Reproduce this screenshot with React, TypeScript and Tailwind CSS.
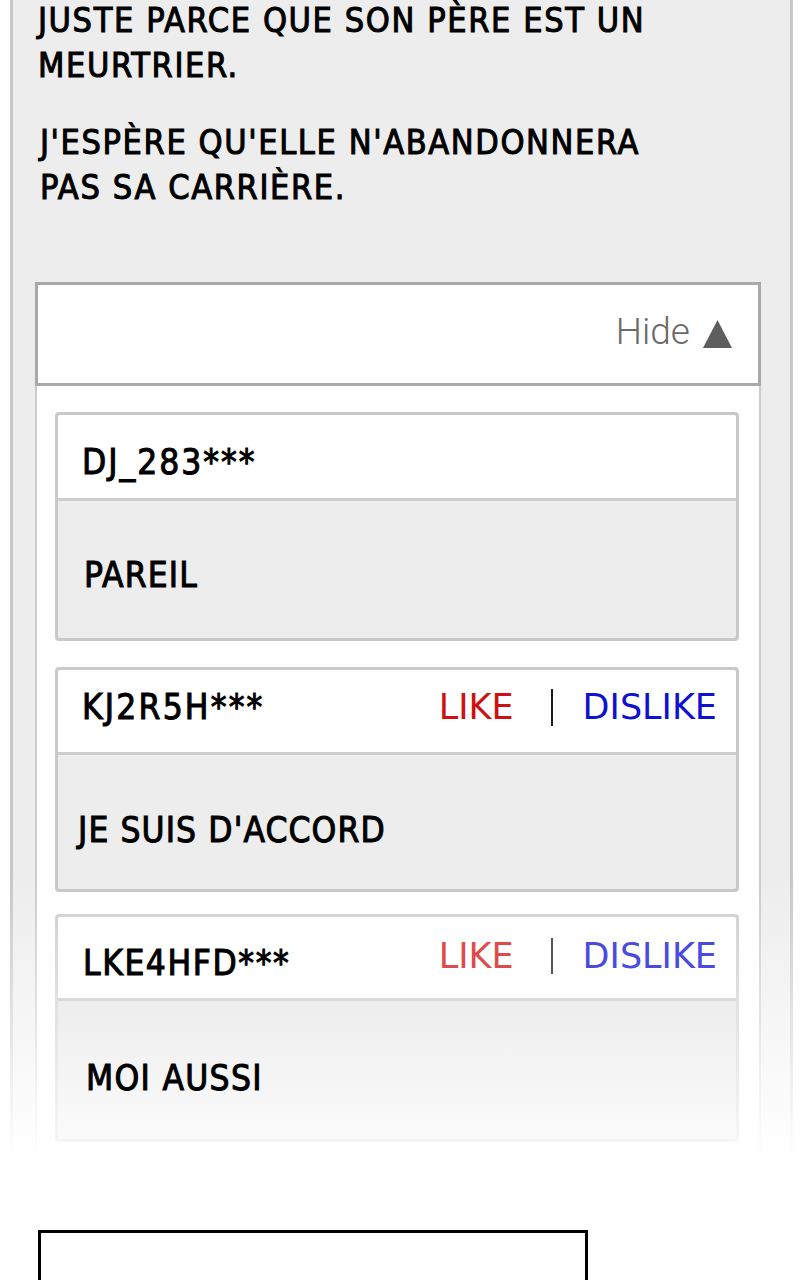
import React from "react";

const cond = "font-['DejaVu_Sans_Condensed','DejaVu_Sans',sans-serif] [font-stretch:condensed] font-normal [-webkit-text-stroke:1px_#000]";

function Votes({ faded }: { faded?: boolean }) {
  return (
    <div className="flex items-center font-['DejaVu_Sans','Verdana',sans-serif] text-[35px] leading-none whitespace-nowrap">
      <span className={faded ? "text-[#de4b4b]" : "text-[#cf1010]"}>LIKE</span>
      <span className={faded ? "ml-[37px] w-[2px] h-[36px] bg-[#555555]" : "ml-[37px] w-[2px] h-[37px] bg-[#1a1a1a]"} />
      <span className={faded ? "ml-[30px] text-[#4a4ade]" : "ml-[30px] text-[#1010cf]"}>DISLIKE</span>
    </div>
  );
}

export default function App() {
  return (
    <div className="w-[800px] h-[1280px] overflow-hidden bg-white">
      {/* outer panel with fading side borders */}
      <div className="ml-[10px] w-[783px] px-[3px] bg-[linear-gradient(to_bottom,#c8c8c8_880px,#ffffff_1162px)]">
        <div className="pb-[4px] bg-[linear-gradient(to_bottom,#ededed_880px,#ffffff_1162px)]">
          <div className={`${cond} text-[34px] leading-[45px] tracking-[1.6px] text-black pl-[25px] whitespace-nowrap`}>
            <p className="-mt-[2px]">
              JUSTE PARCE QUE SON PÈRE EST UN
              <br />
              MEURTRIER.
            </p>
            <p className="mt-[32px] pl-[2px]">
              J'ESPÈRE QU'ELLE N'ABANDONNERA
              <br />
              PAS SA CARRIÈRE.
            </p>
          </div>

          {/* comments container */}
          <div className="mt-[72px] ml-[22px] w-[726px]">
            <div className="h-[104px] border-[3px] border-[#a9a9a9] bg-white flex items-center justify-end pr-[26px]">
              <span className="font-['Roboto',sans-serif] font-light text-[37px] leading-none text-[#6a6a6a] -mt-[6px]">Hide</span>
              <svg className="ml-[13px]" width="29" height="28" viewBox="0 0 29 28">
                <polygon points="14.5,0 29,28 0,28" fill="#5e5e5e" />
              </svg>
            </div>

            <div className="px-[2px] bg-[linear-gradient(to_bottom,#cbcbcb_494px,#ffffff_776px)]">
              <div className="bg-white pt-[26px] pl-[18px] pr-[20px] pb-[21px] flex flex-col">
                {/* card 1 */}
                <div className="rounded-[4px] p-[3px] bg-[#c9c9c9]">
                  <div className="rounded-[2px] overflow-hidden">
                    <div className={`h-[83px] bg-white flex items-center pl-[24px] pt-[12px] ${cond} text-[35px] tracking-[2px] text-black leading-none whitespace-nowrap`}>
                      DJ_283***
                    </div>
                    <div className="h-[3px] bg-[#cdcdcd]" />
                    <div className={`h-[137px] bg-[#ededed] flex items-center pl-[26px] pt-[12px] ${cond} text-[35px] tracking-[1.2px] text-black leading-none whitespace-nowrap`}>
                      PAREIL
                    </div>
                  </div>
                </div>

                {/* card 2 */}
                <div className="mt-[26px] rounded-[4px] p-[3px] bg-[#c9c9c9]">
                  <div className="rounded-[2px] overflow-hidden">
                    <div className="h-[82px] bg-white flex items-center justify-between pl-[24px] pr-[19px] pb-[7px]">
                      <span className={`${cond} text-[35px] tracking-[2.2px] text-black leading-none whitespace-nowrap`}>KJ2R5H***</span>
                      <Votes />
                    </div>
                    <div className="h-[3px] bg-[#cdcdcd]" />
                    <div className={`h-[134px] bg-[#ededed] flex items-center pl-[20px] pt-[16px] ${cond} text-[35px] tracking-[1.1px] text-black leading-none whitespace-nowrap`}>
                      JE SUIS D'ACCORD
                    </div>
                  </div>
                </div>

                {/* card 3 (fading) */}
                <div className="mt-[22px] rounded-[4px] p-[3px] bg-[linear-gradient(to_bottom,#d3d3d3,#f6f6f6)]">
                  <div className="rounded-[2px] overflow-hidden">
                    <div className="h-[81px] bg-white flex items-center justify-between pl-[25px] pr-[19px] pb-[3px]">
                      <span className={`${cond} text-[35px] tracking-[1.6px] text-black leading-none mt-[14px] whitespace-nowrap`}>LKE4HFD***</span>
                      <Votes faded />
                    </div>
                    <div className="h-[3px] bg-[#dadada]" />
                    <div className={`h-[138px] bg-[linear-gradient(to_bottom,#ededed,#fbfbfb)] flex items-center pl-[28px] pt-[16px] ${cond} text-[35px] tracking-[1.3px] text-black leading-none whitespace-nowrap`}>
                      MOI AUSSI
                    </div>
                  </div>
                </div>
              </div>
            </div>
          </div>
        </div>
      </div>

      {/* next panel box */}
      <div className="mt-[63px] ml-[38px] w-[550px] h-[120px] border-[3px] border-black bg-white" />
    </div>
  );
}
